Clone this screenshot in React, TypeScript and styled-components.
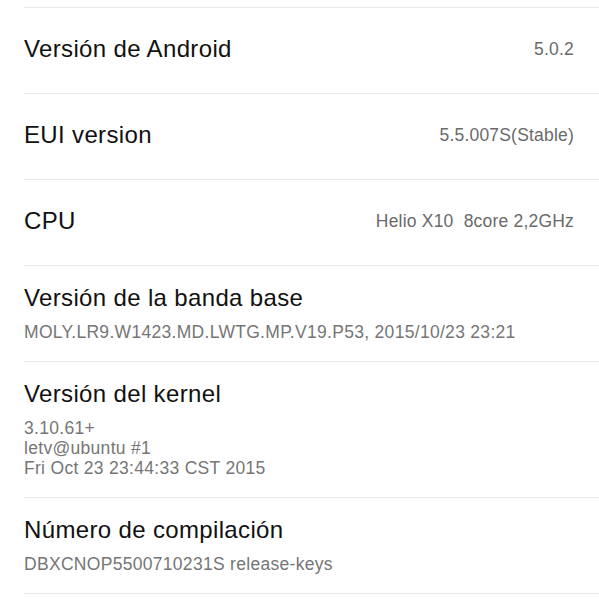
import React, { FC } from "react";
import styled, { createGlobalStyle } from "styled-components";

const GlobalStyle = createGlobalStyle`
  html, body {
    margin: 0;
    padding: 0;
    background: #ffffff;
  }
  body {
    font-family: "Liberation Sans", Arial, Helvetica, sans-serif;
    -webkit-font-smoothing: antialiased;
  }
`;

interface InfoItem {
  title: string;
  value?: string;
  lines?: string[];
}

const items: InfoItem[] = [
  { title: "Versión de Android", value: "5.0.2" },
  { title: "EUI version", value: "5.5.007S(Stable)" },
  { title: "CPU", value: "Helio X10  8core 2,2GHz" },
  {
    title: "Versión de la banda base",
    lines: ["MOLY.LR9.W1423.MD.LWTG.MP.V19.P53, 2015/10/23 23:21"]
  },
  {
    title: "Versión del kernel",
    lines: ["3.10.61+", "letv@ubuntu #1", "Fri Oct 23 23:44:33 CST 2015"]
  },
  {
    title: "Número de compilación",
    lines: ["DBXCNOP5500710231S release-keys"]
  }
];

const Page = styled.div`
  width: 599px;
  height: 599px;
  overflow: hidden;
  padding-top: 7px;
  box-sizing: border-box;
`;

const List = styled.ul`
  list-style: none;
  margin: 0 0 0 24px;
  padding: 0;
  border-top: 1px solid #e9e9e9;
`;

const Row = styled.li`
  border-bottom: 1px solid #e9e9e9;
  padding-right: 25px;
`;

const InlineRow = styled.div`
  display: flex;
  align-items: center;
  justify-content: space-between;
  height: 85px;
  padding-bottom: 3px;
  box-sizing: border-box;
`;

const StackRow = styled.div`
  display: flex;
  flex-direction: column;
  padding: 18px 0 19px;
`;

const Title = styled.span`
  font-size: 24px;
  line-height: 28px;
  letter-spacing: 0.35px;
  color: #111111;
  white-space: nowrap;
`;

const Value = styled.span`
  font-size: 17.5px;
  line-height: 28px;
  letter-spacing: 0.2px;
  color: #6a6a6a;
  white-space: pre;
`;

const Details = styled.div`
  margin-top: 10px;
  display: flex;
  flex-direction: column;
`;

const Line = styled.span`
  font-size: 17.5px;
  line-height: 20px;
  letter-spacing: 0.3px;
  color: #767676;
  white-space: pre;
`;

const InfoRow: FC<{ item: InfoItem }> = ({ item }) => (
  <Row>
    {item.lines ? (
      <StackRow>
        <Title>{item.title}</Title>
        <Details>
          {item.lines.map(line => (
            <Line key={line}>{line}</Line>
          ))}
        </Details>
      </StackRow>
    ) : (
      <InlineRow>
        <Title>{item.title}</Title>
        <Value>{item.value}</Value>
      </InlineRow>
    )}
  </Row>
);

const App: FC = () => (
  <>
    <GlobalStyle />
    <Page>
      <List>
        {items.map(item => (
          <InfoRow key={item.title} item={item} />
        ))}
      </List>
    </Page>
  </>
);

export default App;
